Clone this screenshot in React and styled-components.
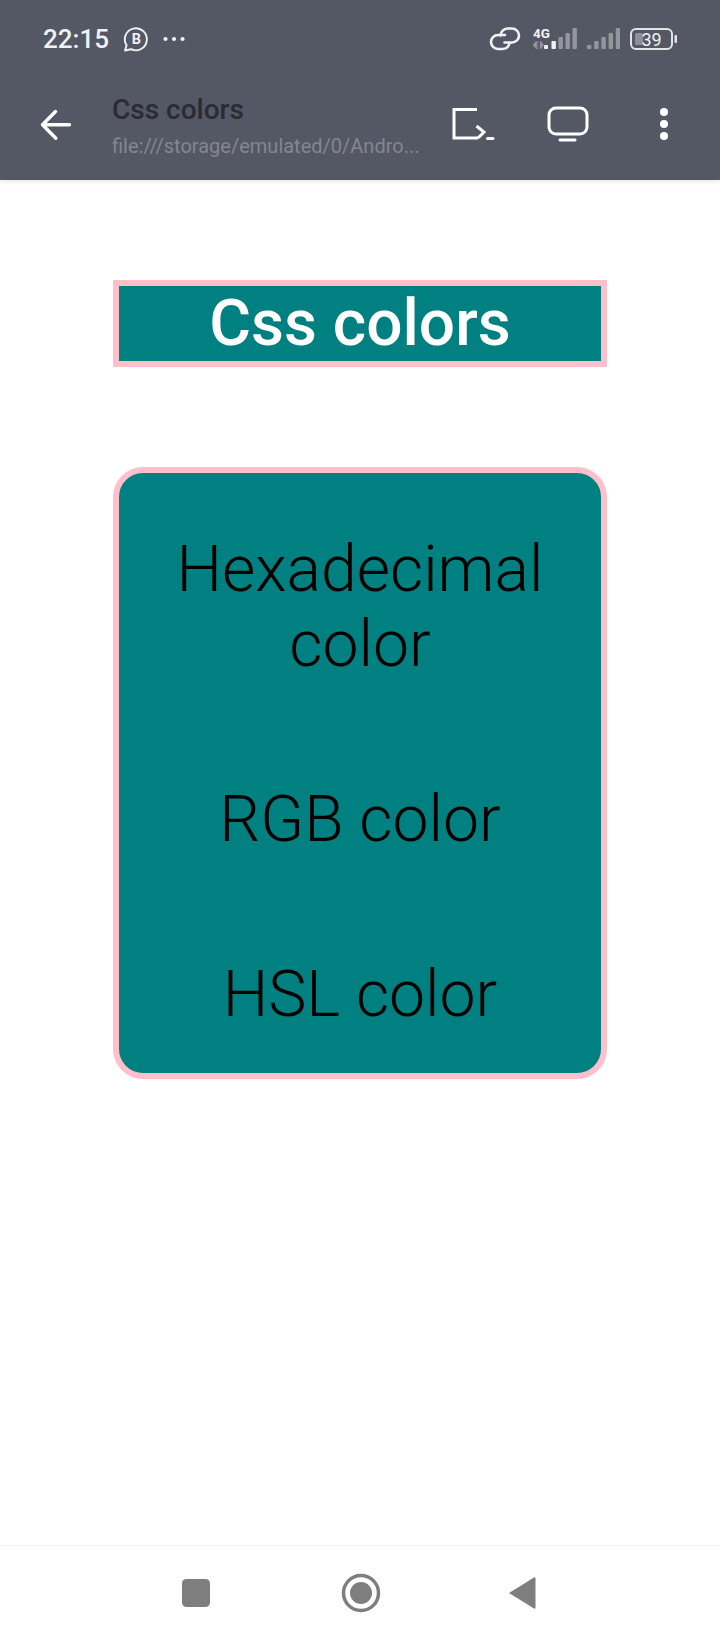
import React from "react";
import styled, { createGlobalStyle } from "styled-components";

const GlobalStyle = createGlobalStyle`
  html, body {
    margin: 0;
    padding: 0;
    background: #fff;
    font-family: Roboto, "Liberation Sans", sans-serif;
  }
`;

const Screen = styled.div`
  width: 720px;
  height: 1640px;
  display: flex;
  flex-direction: column;
  overflow: hidden;
`;

// Phone status bar + webview toolbar
const Header = styled.header`
  height: 180px;
  flex: none;
  background: #545764;
  display: flex;
  flex-direction: column;
  box-shadow: 0 1px 5px rgba(0, 0, 0, 0.12);
`;

const StatusBar = styled.div`
  height: 78px;
  display: flex;
  align-items: center;
  justify-content: space-between;
  padding: 0 43px;
`;

const StatusGroup = styled.div`
  display: flex;
  align-items: center;
  gap: ${(p) => p.$gap}px;
`;

const Clock = styled.span`
  color: #f1f1f4;
  font-size: 26px;
  font-weight: 500;
  line-height: 30px;
`;

const Toolbar = styled.div`
  flex: 1;
  display: flex;
  align-items: flex-start;
  padding: 0 0 0 40px;
`;

const BackSlot = styled.div`
  width: 72px;
  height: 32px;
  margin-top: 31px;
  display: flex;
`;

const TitleBlock = styled.div`
  width: 339px;
  margin-top: 17px;
  display: flex;
  flex-direction: column;
`;

const PageName = styled.span`
  color: #2a2b33;
  font-size: 28px;
  font-weight: 500;
  line-height: 30px;
`;

const PageUrl = styled.span`
  color: #84868f;
  font-size: 20px;
  line-height: 24px;
  margin-top: 9px;
  white-space: nowrap;
`;

const ToolIcons = styled.div`
  display: flex;
  align-items: flex-start;
  margin-top: 28px;
`;

const ToolIcon = styled.div`
  width: ${(p) => p.$w}px;
  height: 38px;
  display: flex;
`;

const Main = styled.main`
  flex: 1;
  padding: 100px 113px 0;
  display: flex;
  flex-direction: column;
  gap: 100px;
`;

const TitleBox = styled.h1`
  margin: 0;
  height: 87px;
  box-sizing: border-box;
  border: 6px solid pink;
  background: teal;
  color: #fff;
  font-size: 64px;
  font-weight: 500;
  line-height: 75px;
  text-align: center;
`;

const ColorCard = styled.section`
  height: 612px;
  box-sizing: border-box;
  border: 6px solid pink;
  border-radius: 30px;
  background: teal;
  padding: 59px 40px 0;
  display: flex;
  flex-direction: column;
  gap: 100px;
`;

const ColorName = styled.p`
  margin: 0;
  color: #000;
  font-size: 64.3px;
  font-weight: 300;
  line-height: 75px;
  text-align: center;
`;

const NavBar = styled.nav`
  height: 94px;
  flex: none;
  border-top: 1px solid #f3f3f3;
  display: flex;
  align-items: center;
  padding: 0 0 0 181px;
`;

const NavSlot = styled.div`
  width: ${(p) => p.$w}px;
  display: flex;
`;

const ChatBadge = () => (
  <svg width="26" height="26" viewBox="0 0 26 26" fill="none">
    <path
      d="M2 24.500l1.600-5.200A11 11 0 1 1 8 23.200z"
      stroke="#f1f1f4"
      strokeWidth="1.900"
      strokeLinejoin="round"
    />
    <text x="13.500" y="18" textAnchor="middle" fontFamily="Roboto" fontSize="14.500" fontWeight="700" fill="#f1f1f4">
      B
    </text>
  </svg>
);

const MoreDots = () => (
  <svg width="22" height="6" viewBox="0 0 22 6" fill="#f1f1f4">
    <circle cx="2.500" cy="3" r="2.100" />
    <circle cx="11" cy="3" r="2.100" />
    <circle cx="19.500" cy="3" r="2.100" />
  </svg>
);

const LinkIcon = () => (
  <svg width="34" height="24" viewBox="0 0 34 24" fill="none" stroke="#f1f1f4" strokeWidth="2.600" strokeLinecap="round">
    <path d="M16 8H9a7 7 0 0 0 0 14h4.500a7.500 7.500 0 0 0 7-5.500" />
    <path d="M11.500 8.500a7.500 7.500 0 0 1 7-7h4.500a7 7 0 0 1 0 14h-7.500" />
  </svg>
);

const barTops = [18, 14, 10, 6, 1];

// litCount: how many of the five bars are lit, the rest stay grey
const SignalBars = ({ litCount }) => (
  <svg width="33" height="24" viewBox="0 0 33 24">
    {barTops.map((top, i) => (
      <rect key={top} x={i * 7.2} y={top} width="4.400" height={22 - top} rx="1" fill={i < litCount ? "#f1f1f4" : "#94969f"} />
    ))}
  </svg>
);

const MobileSignal = () => (
  <svg width="44" height="32" viewBox="0 -4 44 32">
    <text x="0" y="11" fontFamily="Roboto" fontSize="13.500" fontWeight="700" fill="#f1f1f4">
      4G
    </text>
    <path d="M3.500 14v8L0 18zM5 14v8M7.500 14v8M7.500 14l3 4-3 4z" fill="#94969f" stroke="#94969f" strokeWidth="0.700" />
    <rect x="11" y="18" width="4" height="4" rx="1" fill="#f1f1f4" />
    <rect x="18.500" y="14" width="4.400" height="8" rx="1" fill="#f1f1f4" />
    <rect x="25.500" y="10" width="4.400" height="12" rx="1" fill="#94969f" />
    <rect x="32.500" y="6" width="4.400" height="16" rx="1" fill="#94969f" />
    <rect x="39.500" y="1" width="4.400" height="21" rx="1" fill="#94969f" />
  </svg>
);

const Battery = () => (
  <svg width="47" height="24" viewBox="0 0 47 24">
    <rect x="1" y="2" width="41" height="20" rx="5" fill="none" stroke="#e4e4e8" strokeWidth="2" />
    <rect x="5" y="6" width="8" height="12" rx="1.500" fill="#8e9099" />
    <text x="21.500" y="18.500" textAnchor="middle" fontFamily="Roboto" fontSize="18" fill="#f1f1f4">
      39
    </text>
    <rect x="44.500" y="8" width="2.500" height="8" rx="1" fill="#e4e4e8" />
  </svg>
);

const BackArrow = () => (
  <svg width="32" height="32" viewBox="0 0 32 32" fill="none" stroke="#fff" strokeWidth="3.400" strokeLinecap="round" strokeLinejoin="round">
    <path d="M2.500 15.800h27M15.500 2.500L2.500 15.800l13.300 13.400" />
  </svg>
);

const OpenInIcon = () => (
  <svg width="44" height="38" viewBox="0 0 44 38" fill="none" stroke="#fff" strokeWidth="3">
    <path d="M26 3.500H3v28.500h24" />
    <path d="M25.500 20l7.500 6-6 6" />
    <path d="M36.500 32.500h5.500" strokeLinecap="round" />
  </svg>
);

const ScreenIcon = () => (
  <svg width="42" height="38" viewBox="0 0 42 38" fill="none" stroke="#fff" strokeWidth="3">
    <rect x="2" y="2" width="38" height="26" rx="7" />
    <path d="M13 34h15" strokeLinecap="round" />
  </svg>
);

const KebabIcon = () => (
  <svg width="10" height="38" viewBox="0 0 10 38" fill="#fff">
    <circle cx="5" cy="6" r="4" />
    <circle cx="5" cy="18" r="4" />
    <circle cx="5" cy="30" r="4" />
  </svg>
);

const SquareKey = () => (
  <svg width="30" height="30" viewBox="0 0 30 30">
    <rect x="1" y="1" width="28" height="28" rx="4.500" fill="#7e7e7e" />
  </svg>
);

const HomeKey = () => (
  <svg width="40" height="40" viewBox="0 0 40 40">
    <circle cx="20" cy="20" r="17.500" fill="none" stroke="#7e7e7e" strokeWidth="3.500" />
    <circle cx="20" cy="20" r="11" fill="#7e7e7e" />
  </svg>
);

const BackKey = () => (
  <svg width="28" height="34" viewBox="0 0 28 34">
    <path d="M1 17L26 1.500a1 1 0 0 1 1.500 1v29a1 1 0 0 1-1.500 1z" fill="#7e7e7e" />
  </svg>
);

const colors = [["Hexadecimal", "color"], ["RGB color"], ["HSL color"]];

const App = () => (
  <Screen>
    <GlobalStyle />
    <Header>
      <StatusBar>
        <StatusGroup $gap={14}>
          <Clock>22:15</Clock>
          <ChatBadge />
          <MoreDots />
        </StatusGroup>
        <StatusGroup $gap={10}>
          <LinkIcon />
          <MobileSignal />
          <SignalBars litCount={0} />
          <Battery />
        </StatusGroup>
      </StatusBar>
      <Toolbar>
        <BackSlot>
          <BackArrow />
        </BackSlot>
        <TitleBlock>
          <PageName>Css colors</PageName>
          <PageUrl>file:///storage/emulated/0/Andro...</PageUrl>
        </TitleBlock>
        <ToolIcons>
          <ToolIcon $w={96}>
            <OpenInIcon />
          </ToolIcon>
          <ToolIcon $w={112}>
            <ScreenIcon />
          </ToolIcon>
          <ToolIcon $w={10}>
            <KebabIcon />
          </ToolIcon>
        </ToolIcons>
      </Toolbar>
    </Header>
    <Main>
      <TitleBox>Css colors</TitleBox>
      <ColorCard>
        {colors.map((lines) => (
          <ColorName key={lines[0]}>
            {lines.map((line) => (
              <React.Fragment key={line}>
                {line}
                <br />
              </React.Fragment>
            ))}
          </ColorName>
        ))}
      </ColorCard>
    </Main>
    <NavBar>
      <NavSlot $w={160}>
        <SquareKey />
      </NavSlot>
      <NavSlot $w={167}>
        <HomeKey />
      </NavSlot>
      <NavSlot $w={30}>
        <BackKey />
      </NavSlot>
    </NavBar>
  </Screen>
);

export default App;
